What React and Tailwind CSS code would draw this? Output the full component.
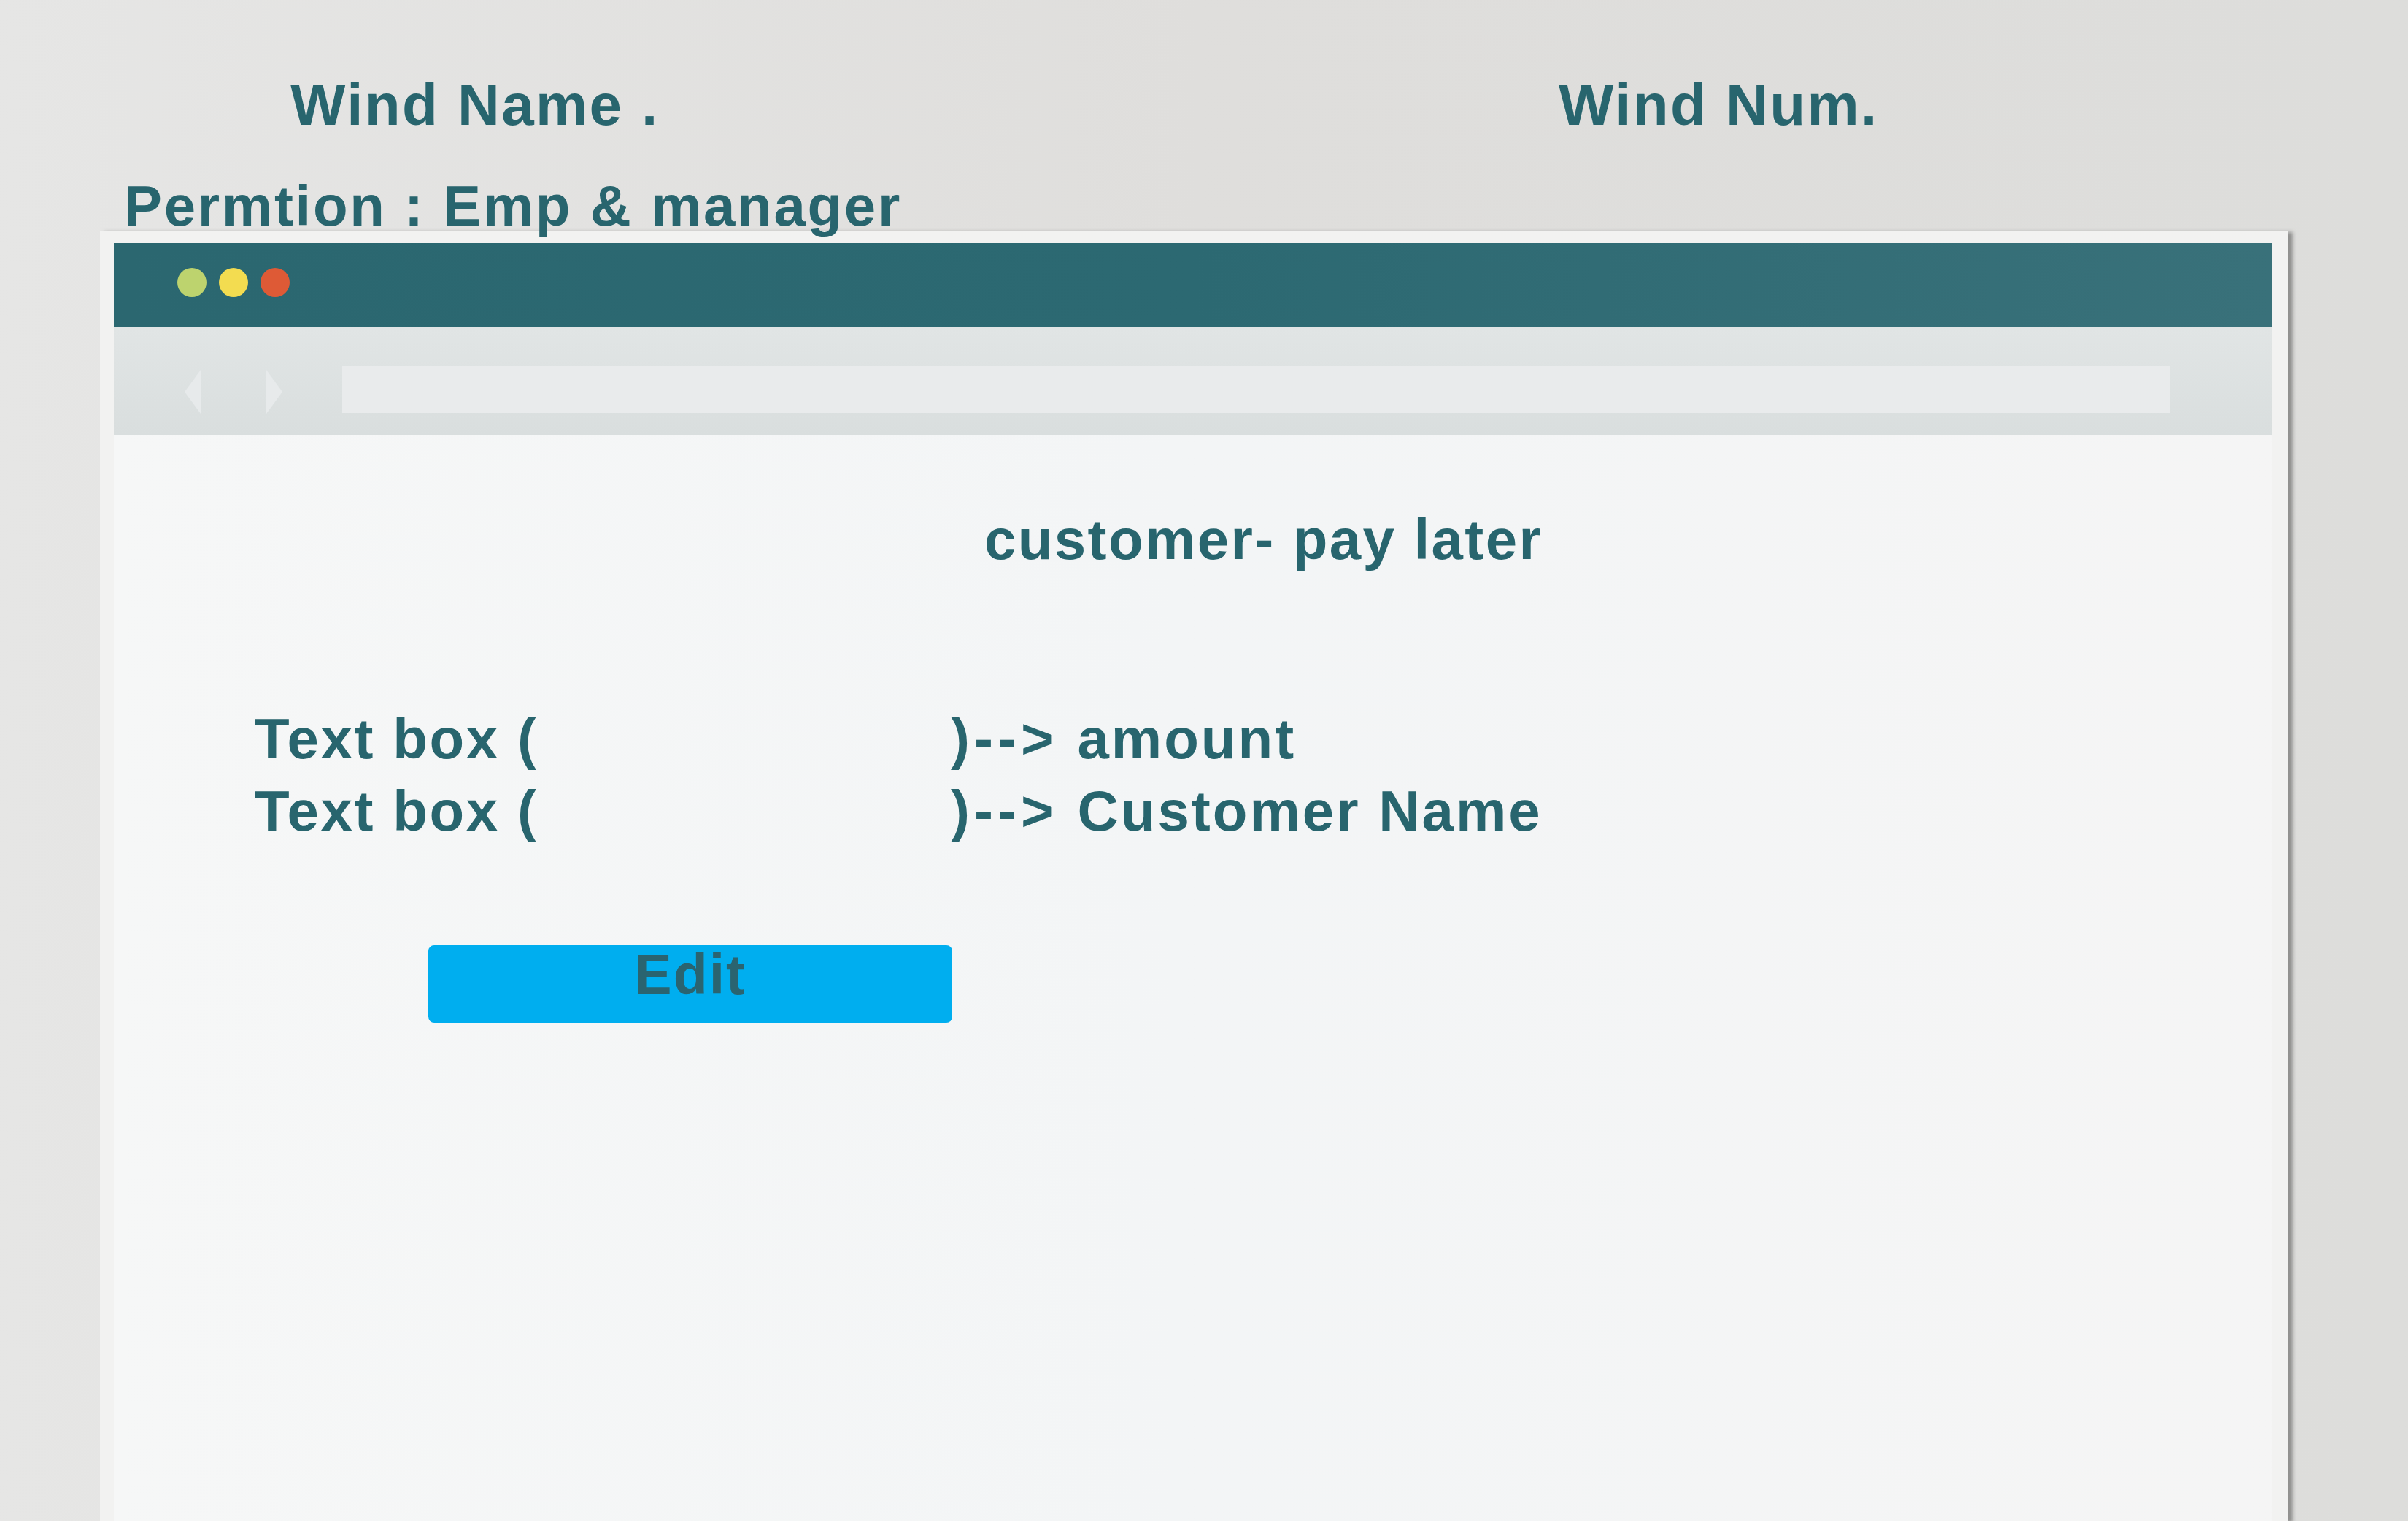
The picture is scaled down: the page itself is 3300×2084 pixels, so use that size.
export default function App() {
  return (
    <div className="w-[3300px] h-[2084px] overflow-hidden bg-gradient-to-r from-[#e6e6e5] via-[#dfdedc] to-[#dddddb] font-['Liberation_Sans',Arial,sans-serif] font-bold text-[#28656e]">
      {/* Header labels */}
      <div className="relative z-10 h-[316px]">
        <div className="flex pt-[104px] pl-[398px] text-[80px] leading-none tracking-[2.4px]">
          <span className="w-[1738px]">Wind Name .</span>
          <span>Wind Num.</span>
        </div>
        <div className="mt-[63px] pl-[170px] text-[78px] leading-[71px] tracking-[2.7px]">
          Permtion : Emp &amp; manager
        </div>
      </div>

      {/* Browser window */}
      <div className="ml-[137px] w-[2999px] h-[1768px] flex flex-col bg-[#f2f2f1] pt-[17px] pl-[19px] pr-[23px] shadow-[6px_2px_5px_rgba(0,0,0,0.35)]">
        {/* Title bar */}
        <div className="h-[115px] shrink-0 flex items-start gap-[17px] pt-[34px] pl-[87px] bg-gradient-to-r from-[#2b6770] via-[#2c6972] to-[#39717a]">
          <span className="w-[40px] h-[40px] rounded-full bg-[#bdd36e]" />
          <span className="w-[40px] h-[40px] rounded-full bg-[#f3dc50]" />
          <span className="w-[40px] h-[40px] rounded-full bg-[#de5a36]" />
        </div>

        {/* Address bar */}
        <div className="h-[148px] shrink-0 flex items-start pt-[54px] pl-[97px] bg-gradient-to-b from-[#e1e5e5] to-[#d9dede]">
          <div className="mt-[5px] flex gap-[90px]">
            <svg width="22" height="60" viewBox="0 0 22 60">
              <polygon points="22,0 22,60 0,30" fill="#e7eaeb" />
            </svg>
            <svg width="22" height="60" viewBox="0 0 22 60">
              <polygon points="0,0 0,60 22,30" fill="#e7eaeb" />
            </svg>
          </div>
          <div className="ml-[82px] w-[2505px] h-[64px] bg-[#e9ebec]" />
        </div>

        {/* Page content */}
        <div className="flex-1 bg-gradient-to-r from-[#f6f7f7] via-[#f3f5f6] to-[#f5f5f5] pt-[104px]">
          <div className="ml-[1193px] text-[78px] leading-none tracking-[2.4px]">
            customer- pay later
          </div>

          <div className="mt-[185px] ml-[193px] text-[78px] leading-[99px] tracking-[2.6px]">
            <div className="flex">
              <span className="w-[954px]">Text box (</span>
              <span className="tracking-[6px]">)--&gt;</span>
              <span className="ml-[26px] tracking-[3px]">amount</span>
            </div>
            <div className="flex">
              <span className="w-[954px]">Text box (</span>
              <span className="tracking-[6px]">)--&gt;</span>
              <span className="ml-[26px] tracking-[3px]">Customer Name</span>
            </div>
          </div>

          <button className="mt-[134px] ml-[431px] w-[718px] h-[106px] flex justify-center items-start pt-[2px] rounded-[8px] bg-[#00aeef] text-[77px] leading-[77px] tracking-[2px] font-bold text-[#2a6470]">
            Edit
          </button>
        </div>
      </div>
    </div>
  );
}
